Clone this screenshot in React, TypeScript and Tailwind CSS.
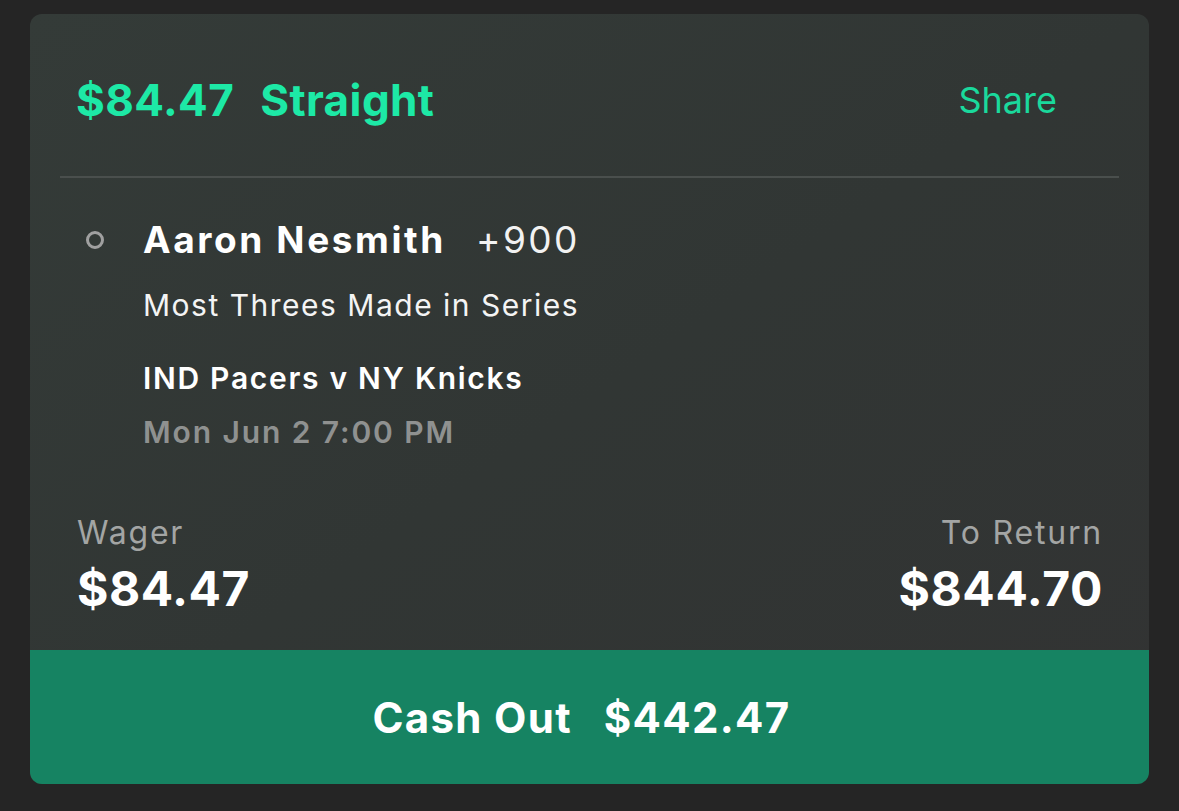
export default function App() {
  return (
    <div
      className="min-h-[811px] w-full bg-[#252525] pt-[14px] px-[30px]"
      style={{ fontFamily: 'Inter, "Noto Sans", sans-serif' }}
    >
      <div className="rounded-[12px] overflow-hidden bg-gradient-to-br from-[#343b38] via-[#313634] to-[#323333]">
        {/* Header */}
        <div className="flex items-center justify-between h-[162px] pt-[10px] pl-[46px] pr-[92px]">
          <div className="text-[44px] leading-[52px] font-bold text-[#1de9a6] tracking-[0.4px]">
            $84.47<span className="ml-[26px]">Straight</span>
          </div>
          <div className="text-[36px] leading-[44px] text-[#1ad99c]">Share</div>
        </div>
        <div className="mx-[30px] h-[2px] bg-[#4a4f4d]" />

        {/* Selection */}
        <div className="flex pl-[56px] pt-[40px]">
          <div className="w-[18px] h-[18px] mt-[13px] rounded-full border-[3px] border-[#a0a0a0]" />
          <div className="ml-[39px]">
            <div className="flex items-baseline text-white h-[44px] leading-[44px]">
              <span className="text-[37px] font-bold tracking-[2.6px]">Aaron Nesmith</span>
              <span className="text-[37px] ml-[30px] text-[#f2f2f2] tracking-[2.4px]">+900</span>
            </div>
            <div className="mt-[25px] text-[30px] leading-[36px] text-[#f4f4f4] tracking-[1.5px]">
              Most Threes Made in Series
            </div>
            <div className="mt-[37px] text-[30px] leading-[36px] font-semibold text-white tracking-[1.7px]">
              IND Pacers v NY Knicks
            </div>
            <div className="mt-[18px] text-[30px] leading-[36px] font-semibold text-[#8f9190] tracking-[1.9px]">
              Mon Jun 2 7:00 PM
            </div>
          </div>
        </div>

        {/* Wager / Return */}
        <div className="flex justify-between pl-[47px] pr-[46px] pt-[64px] pb-[33px]">
          <div>
            <div className="text-[32px] leading-[38px] text-[#a3a5a4] tracking-[1.8px]">Wager</div>
            <div className="mt-[9px] text-[48px] leading-[56px] font-bold text-white tracking-[0.5px]">$84.47</div>
          </div>
          <div className="text-right">
            <div className="text-[32px] leading-[38px] text-[#a3a5a4] tracking-[1.8px]">To Return</div>
            <div className="mt-[9px] text-[48px] leading-[56px] font-bold text-white tracking-[0.6px]">$844.70</div>
          </div>
        </div>

        {/* Cash out */}
        <div className="h-[134px] bg-[#168362] flex items-center justify-center pr-[16px] text-white text-[42px] font-bold tracking-[1.3px]">
          Cash Out<span className="ml-[32px]">$442.47</span>
        </div>
      </div>
    </div>
  );
}
